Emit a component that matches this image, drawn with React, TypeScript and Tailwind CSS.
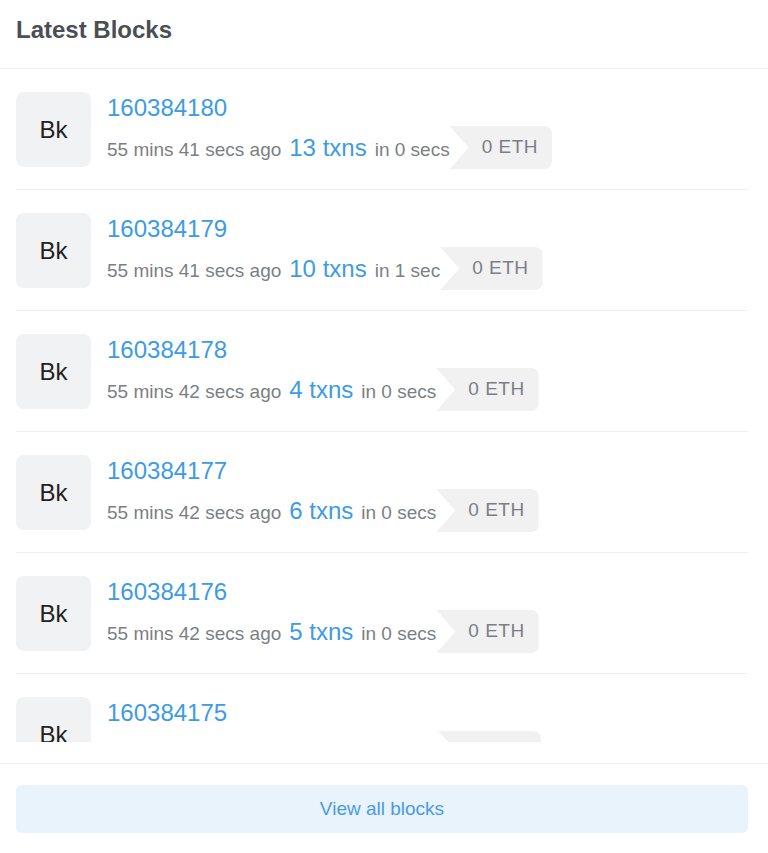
const blocks = [
  { number: '160384180', ago: '55 mins 41 secs ago', txns: '13 txns', took: 'in 0 secs' },
  { number: '160384179', ago: '55 mins 41 secs ago', txns: '10 txns', took: 'in 1 sec' },
  { number: '160384178', ago: '55 mins 42 secs ago', txns: '4 txns', took: 'in 0 secs' },
  { number: '160384177', ago: '55 mins 42 secs ago', txns: '6 txns', took: 'in 0 secs' },
  { number: '160384176', ago: '55 mins 42 secs ago', txns: '5 txns', took: 'in 0 secs' },
  { number: '160384175', ago: '55 mins 42 secs ago', txns: '11 txns', took: 'in 1 sec' },
];

function BlockRow({ number, ago, txns, took }: (typeof blocks)[number]) {
  return (
    <div className="flex gap-4 border-b border-[#efefef] pt-[23px] pb-5">
      <div className="flex h-[75px] w-[75px] shrink-0 items-center justify-center rounded-lg bg-[#f1f2f3] text-[24px] text-[#222]">
        Bk
      </div>
      <div className="flex flex-col">
        <a className="h-[34px] text-[24px] leading-[32px] text-[#3d9be6]">{number}</a>
        <div className="flex h-[43px] items-center whitespace-nowrap">
          <span className="flex items-baseline">
            <span className="text-[19px] text-[#7b7f85]">{ago}</span>
            <span className="ml-2 text-[24px] text-[#3d9be6]">{txns}</span>
            <span className="ml-2 text-[19px] text-[#7b7f85]">{took}</span>
          </span>
          <span className="flex h-[43px] items-center rounded-r-lg bg-[#f1f1f2] pl-8 pr-[14px] text-[19px] tracking-[0.5px] text-[#7b7f85] [clip-path:polygon(0_0,100%_0,100%_100%,0_100%,19px_50%)]">
            0 ETH
          </span>
        </div>
      </div>
    </div>
  );
}

export default function App() {
  return (
    <div className="h-[853px] w-[768px] bg-white font-['Liberation_Sans',Arial,sans-serif]">
      <div className="h-[69px] border-b border-[#efefef] px-4 pt-[15px]">
        <h2 className="text-[24px] font-bold leading-[30px] text-[#4a4e55]">Latest Blocks</h2>
      </div>
      <div className="ml-4 mr-5 h-[673px] overflow-hidden">
        {blocks.map((b) => (
          <BlockRow key={b.number} {...b} />
        ))}
      </div>
      <div className="mt-[21px] border-t border-[#efefef] pl-4 pr-5 pt-[21px]">
        <button
          type="button"
          className="flex h-[48px] w-full items-center justify-center rounded-md bg-[#e8f3fc] text-[19px] text-[#4a9be5]"
        >
          View all blocks
        </button>
      </div>
    </div>
  );
}
